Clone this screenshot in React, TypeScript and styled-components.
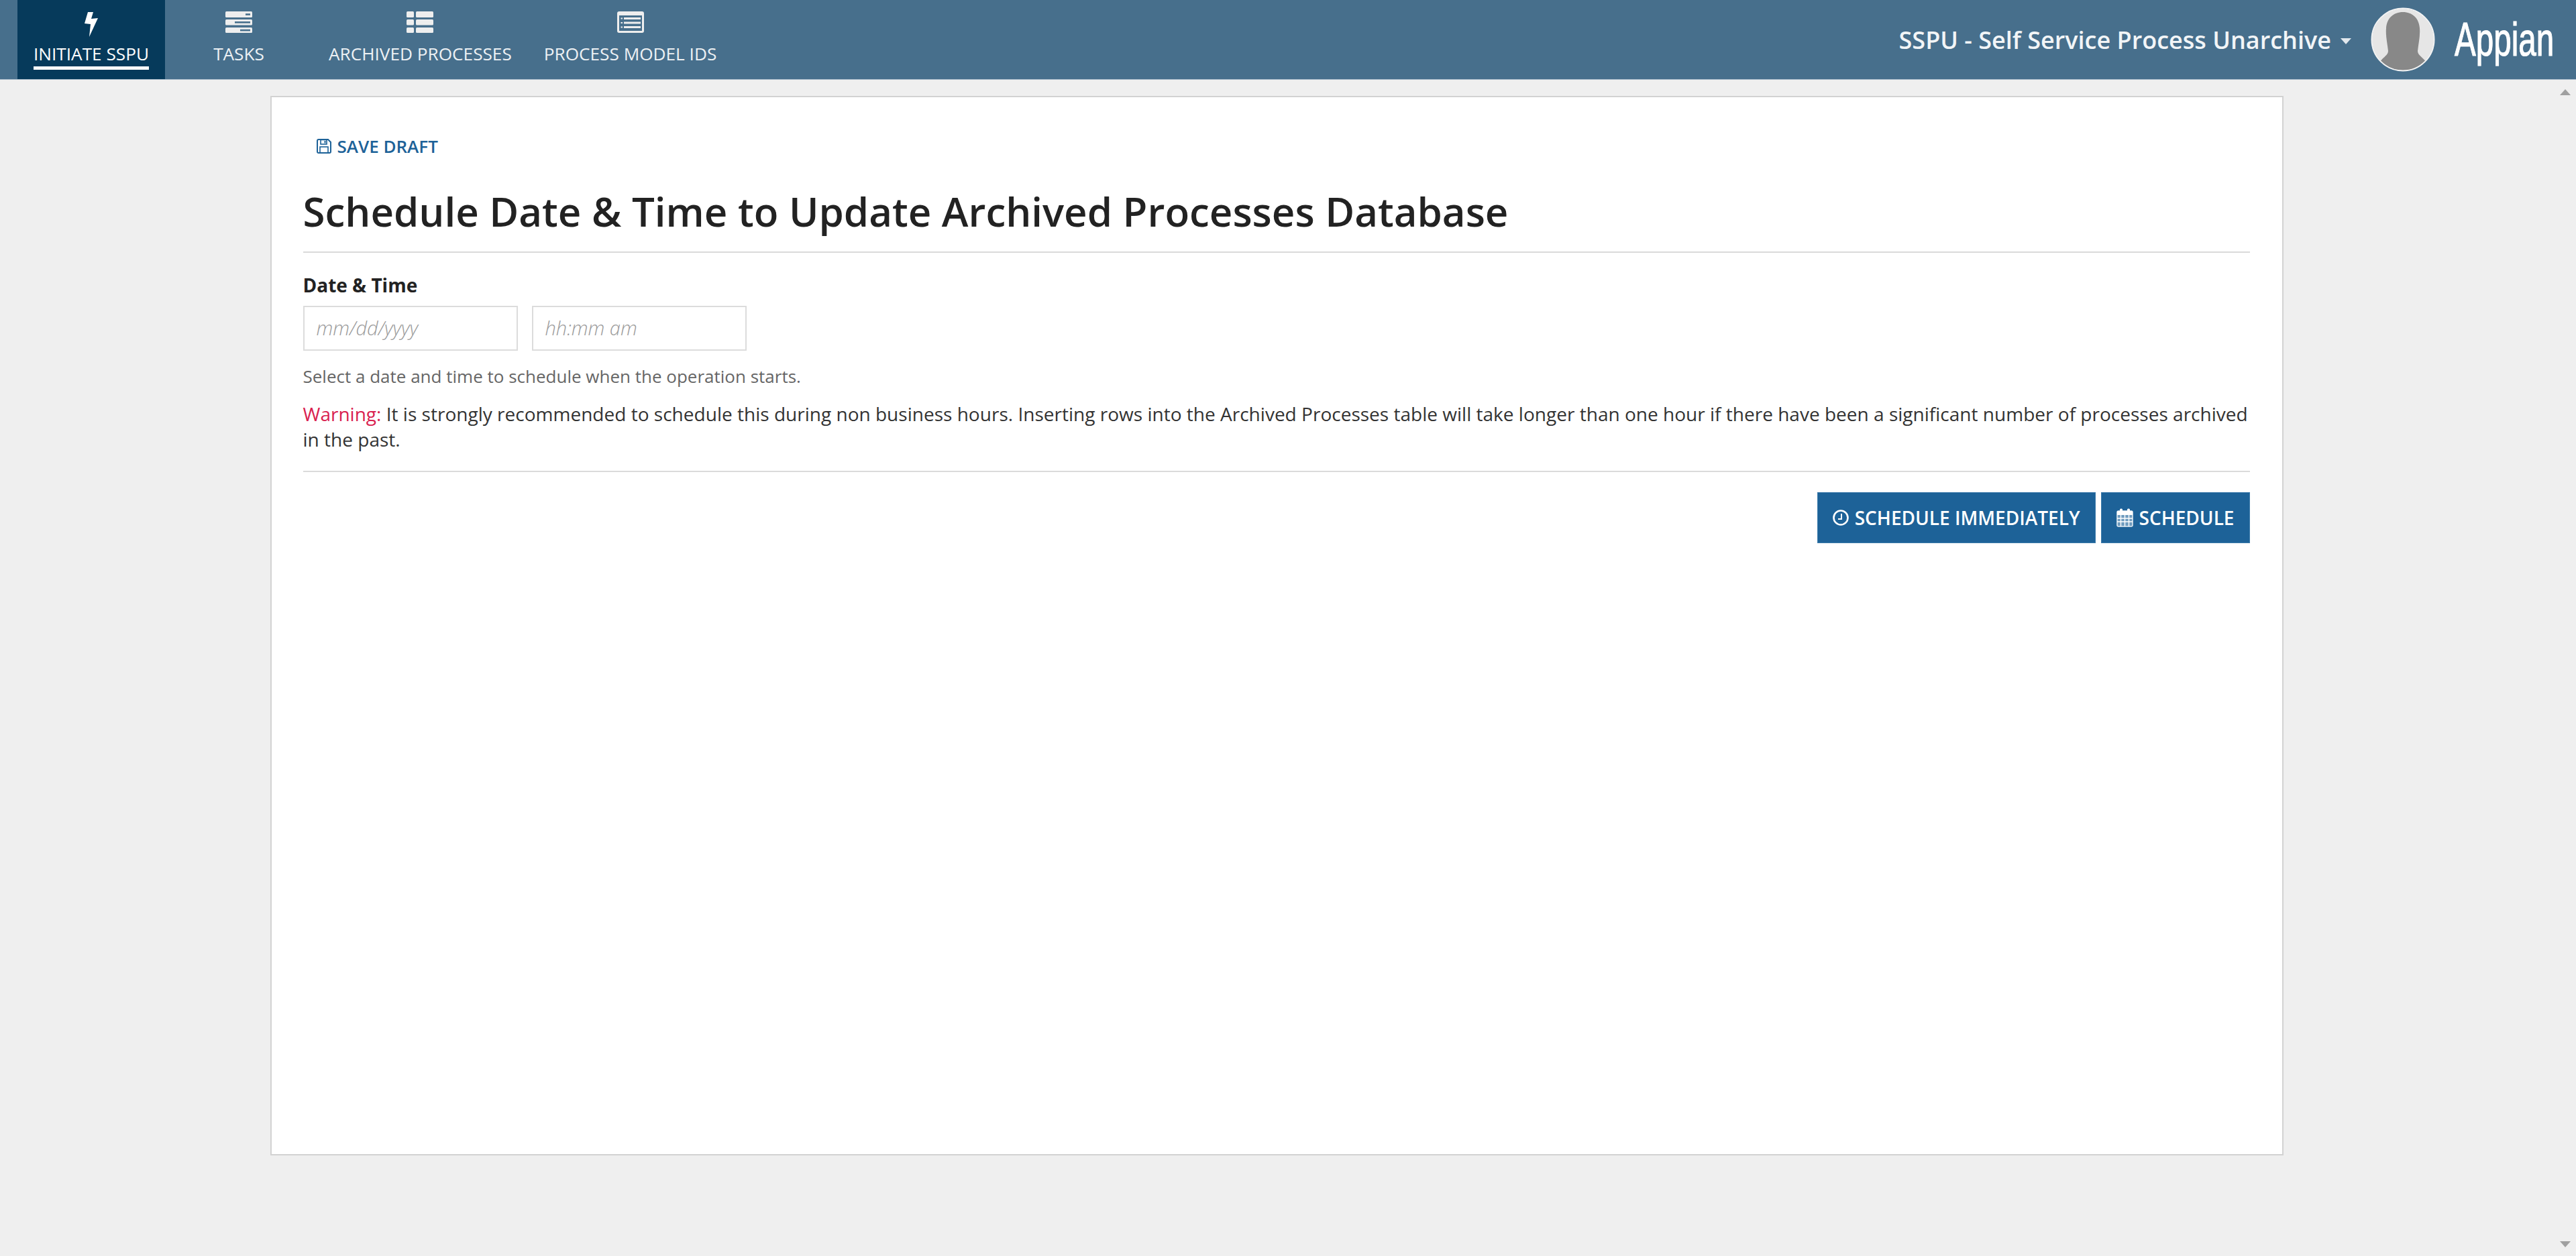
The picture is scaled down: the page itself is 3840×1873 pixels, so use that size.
import React from 'react';
import styled, { createGlobalStyle } from 'styled-components';

const GlobalStyle = createGlobalStyle`
  html, body {
    margin: 0;
    padding: 0;
    height: 100%;
    overflow: hidden;
    background: #efefef;
    font-family: "Open Sans", "Liberation Sans", sans-serif;
  }
  * {
    box-sizing: border-box;
  }
`;

const Page = styled.div`
  display: flex;
  flex-direction: column;
  height: 100vh;
`;

const Header = styled.header`
  display: flex;
  align-items: stretch;
  flex: 0 0 119px;
  padding: 0 27px 0 26px;
  background: #476f8c;
  border-bottom: 1px solid #a9bccb;
`;

const Nav = styled.nav`
  display: flex;
`;

const Tab = styled.a<{ $active?: boolean }>`
  display: flex;
  flex-direction: column;
  align-items: center;
  min-width: 220px;
  padding: 17px 24px 0;
  background: ${p => (p.$active ? '#063a5b' : 'transparent')};
  color: ${p => (p.$active ? '#ffffff' : '#edf1f4')};
  text-decoration: none;
`;

const TabIcon = styled.div`
  display: flex;
  justify-content: center;
  height: 38px;
  margin-bottom: 8px;
`;

const TabLabel = styled.span<{ $active?: boolean }>`
  padding-bottom: 2px;
  border-bottom: 5px solid ${p => (p.$active ? '#ffffff' : 'transparent')};
  font-size: 26.2px;
  line-height: 34px;
  white-space: nowrap;
`;

const HeaderRight = styled.div`
  display: flex;
  align-items: center;
  margin-left: auto;
`;

const SiteTitle = styled.span`
  color: #f2f5f7;
  font-size: 36px;
  font-weight: 600;
  white-space: nowrap;
`;

const Caret = styled.span`
  width: 0;
  height: 0;
  margin: 4px 29px 0 14px;
  border-left: 8px solid transparent;
  border-right: 8px solid transparent;
  border-top: 9px solid #e2e8ed;
`;

const Logo = styled.span`
  display: inline-block;
  width: 154px;
  margin-left: 29px;
  color: #ffffff;
  font-family: "Liberation Sans", sans-serif;
  font-size: 70px;
  line-height: 70px;
  white-space: nowrap;
  -webkit-text-stroke: 1.2px #ffffff;
  transform: scaleX(0.68);
  transform-origin: left center;
`;

const Body = styled.div`
  display: flex;
  flex: 1;
  min-height: 0;
`;

const Main = styled.main`
  flex: 1;
  display: flex;
  justify-content: center;
  align-items: flex-start;
  padding: 24px 2px 0 0;
`;

const Card = styled.section`
  width: 3001px;
  height: 1580px;
  padding: 0 48px 0 47px;
  background: #ffffff;
  border: 2px solid #d2d2d2;
`;

const SaveDraft = styled.a`
  display: inline-flex;
  align-items: center;
  gap: 9px;
  margin: 56px 0 0 20px;
  color: #1d6298;
  font-size: 26px;
  font-weight: 600;
  line-height: 34px;
`;

const Title = styled.h1`
  margin: 39px 0 0;
  padding-bottom: 19px;
  border-bottom: 2px solid #dadada;
  color: #222222;
  font-size: 60px;
  font-weight: 600;
  line-height: 82px;
`;

const FieldLabel = styled.label`
  display: block;
  margin-top: 29px;
  color: #222222;
  font-size: 28px;
  font-weight: 700;
  line-height: 38px;
`;

const FieldRow = styled.div`
  display: flex;
  gap: 21px;
  margin-top: 12px;
`;

const Input = styled.input`
  width: 320px;
  height: 67px;
  padding: 0 18px 2px;
  background: #ffffff;
  border: 2px solid #dcdcdc;
  border-radius: 0;
  outline: none;
  font-family: inherit;
  font-size: 29px;
  font-style: italic;
  font-weight: 300;

  &::placeholder {
    color: #9b9b9b;
    opacity: 1;
  }
`;

const Hint = styled.p`
  margin: 20px 0 0;
  color: #666666;
  font-size: 26px;
  line-height: 37px;
`;

const Warning = styled.p`
  margin: 18px 0 0;
  padding-bottom: 28px;
  border-bottom: 2px solid #dadada;
  color: #333333;
  font-size: 28.04px;
  line-height: 38px;
`;

const WarningWord = styled.span`
  color: #d9214f;
`;

const Actions = styled.div`
  display: flex;
  justify-content: flex-end;
  gap: 8px;
  margin-top: 30px;
`;

const Button = styled.button`
  display: flex;
  align-items: center;
  gap: 9px;
  height: 76px;
  padding: 0 22px;
  background: #1d6298;
  border: 1px solid #3b7aab;
  border-radius: 0;
  color: #ffffff;
  font-family: inherit;
  font-size: 28px;
  font-weight: 600;
  white-space: nowrap;
`;

const Scrollbar = styled.div`
  flex: 0 0 32px;
  display: flex;
  flex-direction: column;
  justify-content: space-between;
  align-items: center;
  padding: 14px 0 13px;
`;

const Arrow = styled.span<{ $up?: boolean }>`
  width: 0;
  height: 0;
  border-left: 8px solid transparent;
  border-right: 8px solid transparent;
  ${p => (p.$up ? 'border-bottom: 9px solid #a0a0a0;' : 'border-top: 9px solid #a0a0a0;')}
`;

const BoltIcon = () => (
  <svg width="20" height="38" viewBox="0 0 20 38" fill="#ffffff">
    <polygon points="5,1 13,1 10,11 20,10 7,38 9,19 0,18" />
  </svg>
);

const TasksIcon = () => (
  <svg width="40" height="32" viewBox="0 0 40 32">
    <rect y="0" width="40" height="9" rx="1.5" fill="#eeeeee" />
    <rect y="12" width="40" height="8.5" rx="1.5" fill="#eeeeee" />
    <rect y="24" width="40" height="8" rx="1.5" fill="#eeeeee" />
    <rect x="30" y="3.2" width="7" height="2.6" fill="#476f8c" />
    <rect x="14" y="15" width="23" height="2.6" fill="#476f8c" />
    <rect x="22" y="26.8" width="15" height="2.6" fill="#476f8c" />
  </svg>
);

const TableIcon = () => (
  <svg width="40" height="32" viewBox="0 0 40 32" fill="#eeeeee">
    <rect x="0" y="0" width="11" height="9" rx="1.5" />
    <rect x="0" y="12" width="11" height="8.5" rx="1.5" />
    <rect x="0" y="24" width="11" height="8" rx="1.5" />
    <rect x="14" y="0" width="26" height="9" rx="1.5" />
    <rect x="14" y="12" width="26" height="8.5" rx="1.5" />
    <rect x="14" y="24" width="26" height="8" rx="1.5" />
  </svg>
);

const ListPanelIcon = () => (
  <svg width="40" height="32" viewBox="0 0 40 32">
    <rect width="40" height="32" rx="3" fill="#eeeeee" />
    <rect x="3" y="6" width="34" height="23" fill="#476f8c" />
    <rect x="5.5" y="9.5" width="2.5" height="2" fill="#eeeeee" />
    <rect x="5.5" y="16" width="2.5" height="2" fill="#eeeeee" />
    <rect x="5.5" y="22.5" width="2.5" height="2" fill="#eeeeee" />
    <rect x="10" y="9" width="25" height="3" fill="#eeeeee" />
    <rect x="10" y="15.5" width="25" height="3" fill="#eeeeee" />
    <rect x="10" y="22" width="25" height="3" fill="#eeeeee" />
  </svg>
);

const SaveIcon = () => (
  <svg width="22" height="22" viewBox="0 0 22 22">
    <path d="M1 3 a2 2 0 0 1 2-2 H17 L21 5 V19 a2 2 0 0 1-2 2 H3 a2 2 0 0 1-2-2 Z" fill="none" stroke="#1d6298" strokeWidth="2" />
    <rect x="6" y="1.5" width="9" height="6.5" fill="none" stroke="#1d6298" strokeWidth="1.6" />
    <rect x="11.5" y="3" width="2" height="3.5" fill="#1d6298" />
    <rect x="5" y="12" width="12" height="9" fill="none" stroke="#1d6298" strokeWidth="1.6" />
  </svg>
);

const ClockIcon = () => (
  <svg width="24" height="26" viewBox="0 0 24 26" fill="none" stroke="#ffffff">
    <circle cx="12" cy="13" r="10.5" strokeWidth="2.6" />
    <path d="M13 7 V15 H8" strokeWidth="2" />
  </svg>
);

const CalendarIcon = () => (
  <svg width="25" height="28" viewBox="0 0 25 28" fill="none" stroke="#ffffff">
    <rect x="1" y="4" width="23" height="23" rx="2" fill="#6f9cbf" stroke="#e8eff5" strokeWidth="1.5" />
    <rect x="1" y="4" width="23" height="6" fill="#ffffff" stroke="none" />
    <rect x="5" y="0.5" width="4" height="6" rx="1.5" fill="#ffffff" stroke="none" />
    <rect x="16" y="0.5" width="4" height="6" rx="1.5" fill="#ffffff" stroke="none" />
    <path d="M6.5 10 V27 M12.5 10 V27 M18.5 10 V27 M1 15 H24 M1 20 H24" strokeWidth="1.4" />
  </svg>
);

const Avatar = () => (
  <svg width="96" height="98" viewBox="0 0 96 98">
    <defs>
      <clipPath id="avatarClip">
        <circle cx="48" cy="49" r="46" />
      </clipPath>
    </defs>
    <circle cx="48" cy="49" r="46" fill="#e6e6e6" />
    <path
      clipPath="url(#avatarClip)"
      d="M48 8 C34 8 24 17 23 32 C22 44 25 56 26 66 C26 72 20 74 12 84 L16 98 H80 L84 84 C76 74 70 72 70 66 C71 56 74 44 73 32 C72 17 62 8 48 8 Z"
      fill="#888888"
    />
    <circle cx="48" cy="49" r="46.5" fill="none" stroke="#f4f4f4" strokeWidth="2" />
  </svg>
);

const tabs = [
  { label: 'INITIATE SSPU', icon: <BoltIcon />, active: true },
  { label: 'TASKS', icon: <TasksIcon /> },
  { label: 'ARCHIVED PROCESSES', icon: <TableIcon /> },
  { label: 'PROCESS MODEL IDS', icon: <ListPanelIcon /> },
];

const App: React.FC = () => {
  return (
    <Page>
      <GlobalStyle />
      <Header>
        <Nav>
          {tabs.map(tab => (
            <Tab key={tab.label} $active={tab.active}>
              <TabIcon>{tab.icon}</TabIcon>
              <TabLabel $active={tab.active}>{tab.label}</TabLabel>
            </Tab>
          ))}
        </Nav>
        <HeaderRight>
          <SiteTitle>SSPU - Self Service Process Unarchive</SiteTitle>
          <Caret />
          <Avatar />
          <Logo>Appian</Logo>
        </HeaderRight>
      </Header>
      <Body>
        <Main>
          <Card>
            <SaveDraft>
              <SaveIcon />
              SAVE DRAFT
            </SaveDraft>
            <Title>Schedule Date &amp; Time to Update Archived Processes Database</Title>
            <FieldLabel>Date &amp; Time</FieldLabel>
            <FieldRow>
              <Input placeholder="mm/dd/yyyy" />
              <Input placeholder="hh:mm am" />
            </FieldRow>
            <Hint>Select a date and time to schedule when the operation starts.</Hint>
            <Warning>
              <WarningWord>Warning:</WarningWord> It is strongly recommended to schedule this during non business hours. Inserting rows into the Archived Processes table will take longer than one hour if there have been a significant number of processes archived in the past.
            </Warning>
            <Actions>
              <Button>
                <ClockIcon />
                SCHEDULE IMMEDIATELY
              </Button>
              <Button>
                <CalendarIcon />
                SCHEDULE
              </Button>
            </Actions>
          </Card>
        </Main>
        <Scrollbar>
          <Arrow $up />
          <Arrow />
        </Scrollbar>
      </Body>
    </Page>
  );
};

export default App;
